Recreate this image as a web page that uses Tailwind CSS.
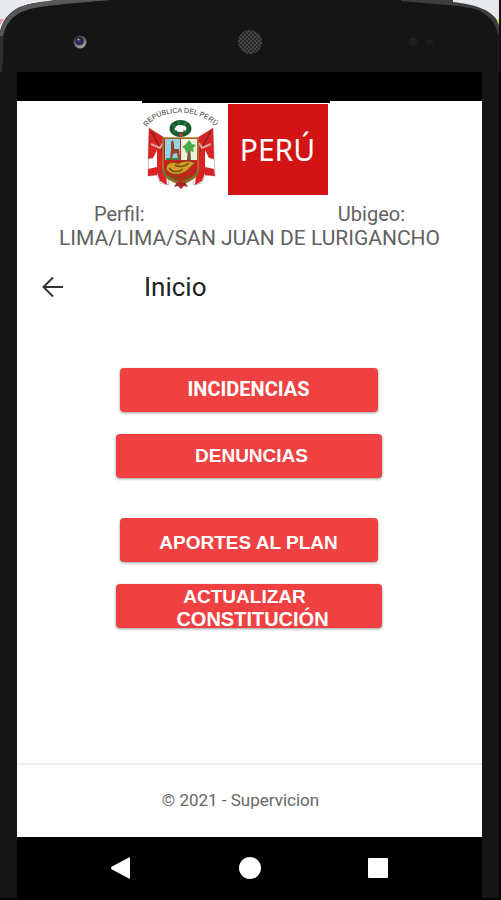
<!DOCTYPE html>
<html lang="es">
<head>
<meta charset="utf-8">
<meta name="viewport" content="width=device-width, initial-scale=1">
<title>Inicio</title>
<script src="https://cdn.jsdelivr.net/npm/@tailwindcss/browser@4"></script>
</head>
<body class="bg-[#151515] font-[Roboto,sans-serif]">
<div class="relative flex min-h-screen flex-col border-r-2 border-b-2 border-black bg-[#151515]">
  <!-- Rounded corners of the handset -->
  <svg class="absolute top-0 left-0 h-[72px] w-[120px]" viewBox="0 0 120 72" aria-hidden="true">
    <path d="M0 0H60C42 2 30 3 20 7C9 12 2 21 0 32Z" fill="#e7e9ed"/>
    <path d="M0 19h4L0 25Z" fill="#e8a0aa"/>
    <path d="M54 0H110C70 4 42 5 27 10C12 15 4 24 3 40V72H0V32C2 21 9 12 20 7C30 3 42 2 54 0Z" fill="#555758"/>
    <path d="M110 2C70 5 43 6 28 11C13 16 4 25 3 40L2 72H120V2Z" fill="#151515"/>
    <path d="M0 36H3L2 72H0Z" fill="#2d2e2f"/>
  </svg>
  <svg class="absolute top-0 -right-[2px] h-[72px] w-[120px]" viewBox="0 0 120 72" aria-hidden="true">
    <path d="M68 0H119V26L116 20C108 10 98 6 68 3Z" fill="#e7e9ed"/>
    <path d="M115 19h4v6h-2Z" fill="#dfe25a"/>
    <path d="M20 0H72V2C96 5 107 9 115 19C118 23 119 28 119 34V72H117V35C116 24 108 14 94 9C78 5 50 4 20 1Z" fill="#3c3e3f"/>
    <path d="M117 34H119V72H117Z" fill="#222"/>
    <path d="M119 0V72" stroke="#111" stroke-width="2"/>
  </svg>

  <!-- Camera, speaker and sensors -->
  <div class="relative grid h-[72px] grid-cols-3 items-center px-[17px] pb-1" aria-hidden="true">
    <svg class="ml-[55px] mt-4 size-4" viewBox="0 0 16 16">
      <defs><linearGradient id="lens" x1="0" y1="0" x2=".6" y2="1"><stop offset="0" stop-color="#25252a"/><stop offset="1" stop-color="#a0a0a4"/></linearGradient></defs>
      <circle cx="8" cy="8" r="6.5" fill="url(#lens)"/>
      <circle cx="7.500" cy="7" r="4" fill="#25243c"/>
      <circle cx="7.500" cy="7.500" r="2" fill="#332c8c"/>
      <circle cx="6.500" cy="5.500" r="1" fill="#b9b8d4"/>
    </svg>
    <svg class="mt-4 size-6 justify-self-center" viewBox="0 0 24 24">
      <defs><pattern id="mesh" width="4" height="4" patternUnits="userSpaceOnUse"><rect width="4" height="4" fill="#454545"/><circle cx="1" cy="1" r="1" fill="#202020"/><circle cx="3" cy="3" r="1" fill="#202020"/></pattern></defs>
      <circle cx="12" cy="12" r="12" fill="url(#mesh)"/>
    </svg>
    <svg class="mr-[47px] mt-4 h-3 w-7 justify-self-end" viewBox="0 0 28 12">
      <circle cx="6" cy="6" r="4" fill="#202020"/><circle cx="23" cy="6" r="3" fill="#202020"/>
    </svg>
  </div>

  <div class="flex flex-1 flex-col px-[17px]">
    <div class="h-[29px] bg-black"></div>

    <main class="flex flex-1 flex-col bg-white">
      <header>
        <div class="flex justify-center pr-7">
          <div class="flex gap-2 border-t-2 border-black pr-[2px]">
            <svg class="h-[92px] w-[78px]" viewBox="0 0 78 92" role="img" aria-label="Escudo de la República del Perú">
              <path id="arco" d="M5 24C15 5 63 4 75 27" fill="none"/>
              <text font-family="Liberation Sans, sans-serif" font-size="7" fill="#333"><textPath href="#arco">REPÚBLICA DEL PERÚ</textPath></text>
              <!-- Flags -->
              <path d="M7 25L24 36L27 82L18 80L15 72L6 73Z" fill="#fff" stroke="#a9a9a9" stroke-width=".7"/>
              <path d="M71 25L54 36L51 82L60 80L63 72L73 73Z" fill="#fff" stroke="#a9a9a9" stroke-width=".7"/>
              <path d="M7 25L23 35L24 48L15 47L11 55L6 56ZM71 25L55 35L54 48L63 47L67 55L72 56Z" fill="#d92324"/>
              <path d="M15 46L22 48L25 82L18 78L15 70ZM63 46L56 48L53 82L60 78L63 70Z" fill="#d92324"/>
              <path d="M6 66L15 64V72L6 73ZM72 66L63 64V72L73 73Z" fill="#d92324"/>
              <path d="M9 28L20 48M69 28L58 48" stroke="#7e251d" stroke-width="1.500"/>
              <path d="M9 41l9 4 3-5M69 41l-9 4-3-5" fill="none" stroke="#e0a29b" stroke-width="2"/>
              <!-- Wreath -->
              <ellipse cx="38.500" cy="25.500" rx="8.500" ry="6" fill="#fff" stroke="#155c2e" stroke-width="5"/>
              <path d="M31 21l3 4M37 18v4M44 19l-2 4M31 29l4-2M45 29l-4-2" stroke="#4b9459"/>
              <circle cx="39" cy="32" r="2" fill="#bd342c"/>
              <!-- Shield -->
              <path d="M21 35H56V66C56 76 46 78 39 82C31 78 21 76 21 66Z" fill="#c81f1f" stroke="#a57d28" stroke-width="1.500"/>
              <path d="M23 36H38V57H23Z" fill="#90d3e2"/>
              <path d="M39 36H55V57H39Z" fill="#e9f2dd"/>
              <path d="M29 39l2-2 1 4v5h5l1 10h-2l-1-6-4 1-1 5h-2l1-9Z" fill="#9c3f25"/>
              <path d="M24 56h14" stroke="#458043" stroke-width="2"/>
              <path d="M46 43h2l1 14h-4Z" fill="#79583b"/>
              <path d="M47 37l3 4 4 1-3 3 1 4-4-1-4 2-1-4-3-2 4-3Z" fill="#4baa4c"/>
              <path d="M24 66C24 60 31 57 36 61C41 57 50 57 53 61C50 61 48 66 43 69C36 73 27 72 24 66Z" fill="#d79b28" stroke="#765115"/>
              <path d="M27 65c3 4 9 5 14 1M33 62c5 3 9 2 14-2M27 72c8 5 16 4 23-1" fill="none" stroke="#70500e" stroke-width="1.500"/>
              <path d="M21 66C22 75 31 76 39 80C47 76 55 75 56 66" fill="none" stroke="#6b7530" stroke-width="2"/>
              <path d="M35 79h8l3 5-4-1-3 3-3-3-4 1Z" fill="#a92826"/>
            </svg>
            <div class="mt-px flex h-[91px] w-[100px] items-center justify-center bg-[#d21414] font-['Noto_Sans',sans-serif] text-[30px] leading-none text-white">PERÚ</div>
          </div>
        </div>
        <div class="pt-[7px] text-center text-[20px] leading-6 text-[#616161]">
          <p class="flex justify-between px-[77px]"><span>Perfil:</span><span>Ubigeo:</span></p>
          <p class="text-[21px]">LIMA/LIMA/SAN JUAN DE LURIGANCHO</p>
        </div>
        <div class="mt-[13px] flex h-12 items-center pl-6">
          <button type="button" aria-label="Volver" class="flex size-6 items-center justify-center">
            <svg class="size-6" viewBox="0 0 24 24" fill="none" stroke="#333" stroke-width="2"><path d="M22 12H3M12 2.500L2.500 12L12 21.500"/></svg>
          </button>
          <h1 class="ml-[79px] text-[26px] leading-8 text-[#222]">Inicio</h1>
        </div>
      </header>

      <nav class="flex flex-col items-center pt-[57px] pr-[2px] font-['Liberation_Sans',sans-serif] text-[19px] leading-[23px] font-bold text-white" aria-label="Menú principal">
        <button type="button" class="h-11 w-[258px] rounded bg-[#ef4141] pb-[2px] font-[Roboto,sans-serif] text-[20px] shadow-[0_1px_3px_#0006]">INCIDENCIAS</button>
        <button type="button" class="mt-[22px] h-11 w-[266px] rounded bg-[#ef4141] pb-[2px] pl-[6px] shadow-[0_1px_3px_#0006]">DENUNCIAS</button>
        <button type="button" class="mt-10 h-11 w-[258px] rounded bg-[#ef4141] pt-1 shadow-[0_1px_3px_#0006]">APORTES AL PLAN</button>
        <button type="button" class="mt-[22px] flex h-11 w-[266px] flex-col items-center rounded bg-[#ef4141] pt-px shadow-[0_1px_3px_#0006]"><span class="pr-2">ACTUALIZAR</span><span class="pl-2 text-[20px]">CONSTITUCIÓN</span></button>
      </nav>

      <footer class="mt-auto flex h-[74px] items-center justify-center border-t-2 border-[#eee] pr-[18px] text-[17px] text-[#666]">© 2021 - Supervicion</footer>
    </main>

    <div class="flex h-[61px] items-center justify-center gap-[107px] bg-black pr-[2px]">
      <button type="button" aria-label="Atrás"><svg class="size-[22px]" viewBox="0 0 22 22"><path d="M20 1V21Q20 22 19 21.500L2 12.500Q0 11 2 9.500L19 .5Q20 0 20 1Z" fill="#fff"/></svg></button>
      <button type="button" aria-label="Inicio" class="size-[22px] rounded-full bg-white"></button>
      <button type="button" aria-label="Recientes" class="size-5 rounded-[1px] bg-white"></button>
    </div>
  </div>
</div>
</body>
</html>
